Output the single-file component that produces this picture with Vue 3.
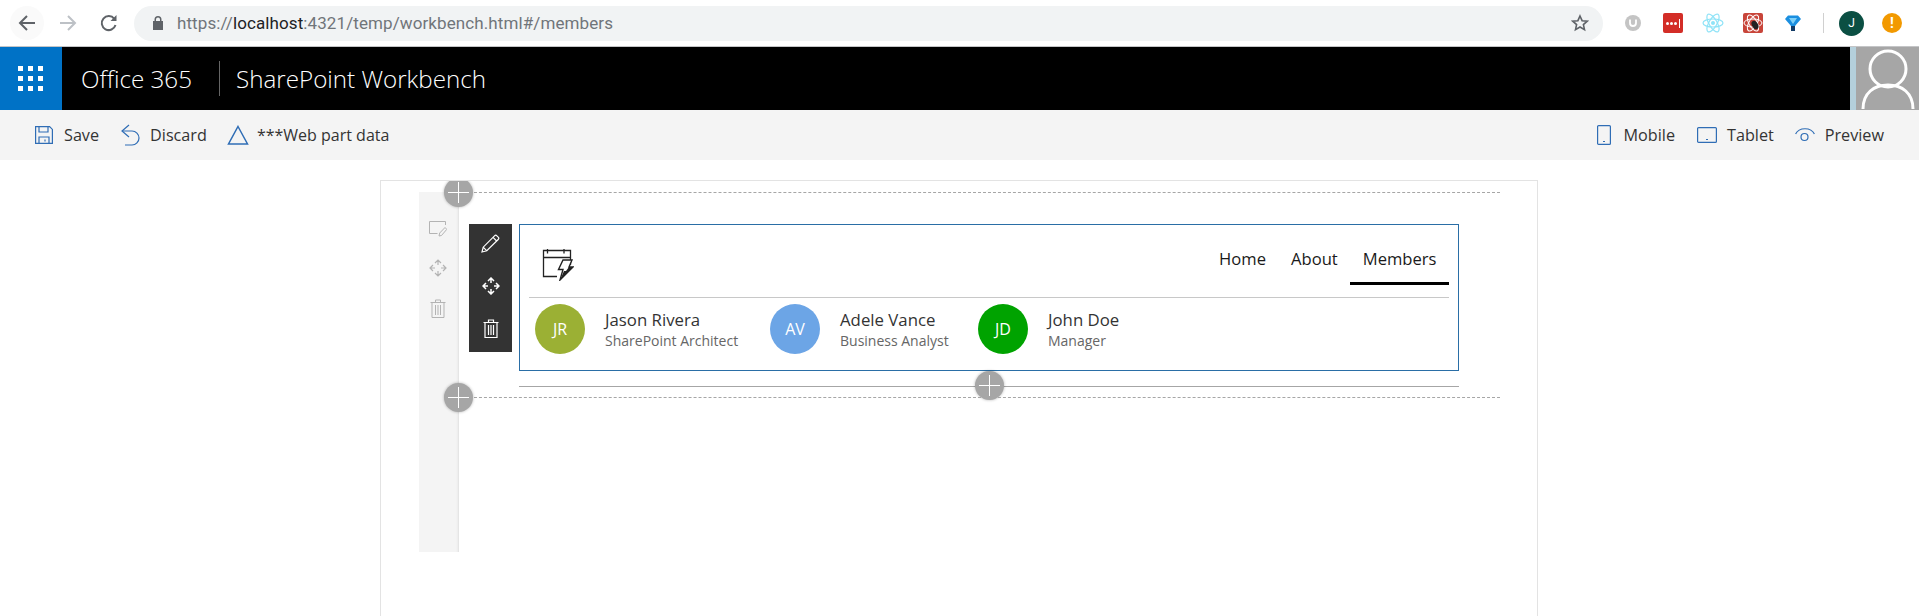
<script setup>
const people = [
  { id: 'JR', name: 'Jason Rivera', role: 'SharePoint Architect', tone: 'olive' },
  { id: 'AV', name: 'Adele Vance', role: 'Business Analyst', tone: 'sky' },
  { id: 'JD', name: 'John Doe', role: 'Manager', tone: 'green' }
]
const links = ['Home', 'About', 'Members']
</script>

<template>
  <div class="app">
    <header class="chrome">
      <div class="nav-icons">
        <span class="back-wrap">
          <svg width="18" height="18" viewBox="0 0 18 18" fill="none" stroke="#5f6368" stroke-width="2"><path d="M17 9H2M9 2 2 9l7 7"/></svg>
        </span>
        <svg class="fwd" width="18" height="18" viewBox="0 0 18 18" fill="none" stroke="#bdc1c6" stroke-width="2"><path d="M1 9h15M9 2l7 7-7 7"/></svg>
        <svg class="reload" width="18" height="18" viewBox="0 0 18 18" fill="none" stroke="#5f6368" stroke-width="2"><path d="M15.500 11a7 7 0 1 1-1.200-6.200"/><path d="M16.500 1v6h-6" fill="#5f6368" stroke="none"/></svg>
      </div>
      <div class="omnibox">
        <svg class="lock" width="12" height="14" viewBox="0 0 12 14"><path fill="#5f6368" d="M1 5h1.500V3.500a3.500 3.500 0 0 1 7 0V5H11v9H1zM4 5h4V3.500a2 2 0 0 0-4 0z"/></svg>
        <span class="url"><span class="dim">https://</span><span class="host">localhost</span><span class="dim">:4321/temp/workbench.html#/members</span></span>
        <svg class="star" width="18" height="18" viewBox="0 0 18 18" fill="none" stroke="#5f6368" stroke-width="1.600"><path d="M9 2l2.100 4.700 5.100.5-3.800 3.400 1.100 5L9 13l-4.500 2.600 1.100-5L1.800 7.200l5.100-.5z"/></svg>
      </div>
      <div class="extensions">
        <span class="ext-u"><svg width="10" height="10" viewBox="0 0 10 10" fill="none" stroke="#fff" stroke-width="1.800"><path d="M2 1.500v3.500a3 3 0 0 0 6 0V1.500"/></svg></span>
        <span class="ext-lp"><i></i><i></i><i></i><b></b></span>
        <svg class="ext" width="22" height="20" viewBox="0 0 22 20" fill="none" stroke="#8fe3f7" stroke-width="1.200"><ellipse cx="11" cy="10" rx="10" ry="4"/><ellipse cx="11" cy="10" rx="10" ry="4" transform="rotate(60 11 10)"/><ellipse cx="11" cy="10" rx="10" ry="4" transform="rotate(120 11 10)"/><circle cx="11" cy="10" r="2" fill="#8fe3f7" stroke="none"/></svg>
        <span class="ext-bug"><svg width="20" height="20" viewBox="0 0 20 20" fill="none" stroke="#fff" stroke-width="1"><ellipse cx="10" cy="10" rx="9" ry="4"/><ellipse cx="10" cy="10" rx="9" ry="4" transform="rotate(60 10 10)"/><ellipse cx="10" cy="10" rx="9" ry="4" transform="rotate(120 10 10)"/><ellipse cx="12" cy="12" rx="3" ry="4.500" fill="#222" stroke="none" transform="rotate(-30 12 12)"/></svg></span>
        <svg class="ext funnel" width="20" height="20" viewBox="0 0 20 20"><path fill="#1b8fe0" d="M2 6l3-3.500h10L18 6l-6 7H8z"/><path fill="#7fd0f7" d="M6 5h8l-4 6z"/><path fill="#123a66" d="M8 13h4v5H8z"/></svg>
        <span class="ext-sep"></span>
        <span class="ext-avatar">J</span>
        <span class="ext-alert">!</span>
      </div>
    </header>

    <div class="suite">
      <div class="waffle"><i v-for="n in 9" :key="n"></i></div>
      <span class="brand">Office 365</span>
      <span class="suite-title">SharePoint Workbench</span>
      <div class="profile">
        <svg width="63" height="63" viewBox="0 0 63 63" fill="none" stroke="#fff" stroke-width="3"><circle cx="32" cy="22" r="18"/><path d="M7 62c0-16 11-24 25-24s25 8 25 24"/></svg>
      </div>
    </div>

    <nav class="commands">
      <div class="cmd-group">
        <button class="cmd save">
          <svg width="18" height="18" viewBox="0 0 18 18" fill="none" stroke="#2f6db5" stroke-width="1.200"><path d="M.6.6h14l2.800 2.800v14H.6z"/><path d="M4 .6v5.400h9V.6M4 17.400V11h10v6.400"/><path d="M10 13.500v2"/></svg>
          Save
        </button>
        <button class="cmd discard">
          <svg width="20" height="22" viewBox="0 0 20 22" fill="none" stroke="#2f6db5" stroke-width="1.200"><path d="M9 1 2 7l7 6"/><path d="M2 7h10a6.500 6.500 0 0 1 0 14H5"/></svg>
          Discard
        </button>
        <button class="cmd data">
          <svg width="22" height="20" viewBox="0 0 22 20" fill="none" stroke="#2f6db5" stroke-width="1.500"><path d="M11 1.500 20.500 19h-19z"/></svg>
          ***Web part data
        </button>
      </div>
      <div class="cmd-group">
        <button class="cmd mobile">
          <svg width="14" height="20" viewBox="0 0 14 20" fill="none" stroke="#2f6db5" stroke-width="1.200"><rect x=".6" y=".6" width="12.800" height="18.800" rx="1"/><path d="M6 16.500h2"/></svg>
          Mobile
        </button>
        <button class="cmd tablet">
          <svg width="20" height="16" viewBox="0 0 20 16" fill="none" stroke="#2f6db5" stroke-width="1.200"><rect x=".6" y=".6" width="18.800" height="14.800" rx="1"/><path d="M9 12.500h2"/></svg>
          Tablet
        </button>
        <button class="cmd preview">
          <svg width="20" height="14" viewBox="0 0 20 14" fill="none" stroke="#2f6db5" stroke-width="1.200"><path d="M.6 6C4-1 16-1 19.400 6"/><circle cx="9.500" cy="9" r="3.500"/></svg>
          Preview
        </button>
      </div>
    </nav>

    <main class="canvas">
      <aside class="rail">
        <svg width="18" height="16" viewBox="0 0 18 16" fill="none" stroke="#b3b3b3" stroke-width="1"><path d="M16.500 4V.5H.5v12h8"/><path d="M10 15l.7-3 5.300-5.500 1.800 1.800L12.500 14.500z"/></svg>
        <svg width="18" height="18" viewBox="0 0 18 18" fill="none" stroke="#b3b3b3" stroke-width="1.200"><path d="M6 4l3-3 3 3M6 14l3 3 3-3M4 6 1 9l3 3M14 6l3 3-3 3M9 1v5M9 12v5M1 9h5M12 9h5"/></svg>
        <svg width="16" height="19" viewBox="0 0 16 19" fill="none" stroke="#b3b3b3" stroke-width="1"><path d="M.5 3.500h15M2 3.500v15h12v-15M5.500 3.500V1h5v2.500M5.500 6v10M8 6v10M10.500 6v10"/></svg>
      </aside>

      <section class="column">
        <div class="line-add">
          <span class="plus"></span>
        </div>

        <div class="zone">
          <div class="tools">
            <svg width="19" height="19" viewBox="0 0 19 19" fill="none" stroke="#fff" stroke-width="1.200"><path d="M1 18l1.200-4.800L13.500 1.800a1.700 1.700 0 0 1 2.400 0l1.300 1.300a1.700 1.700 0 0 1 0 2.400L5.800 16.800zM2.200 13.200l3.600 3.600M12 3.300l3.700 3.700"/></svg>
            <svg width="18" height="18" viewBox="0 0 18 18" fill="none" stroke="#fff" stroke-width="1.500"><path d="M6 4l3-3 3 3M6 14l3 3 3-3M4 6 1 9l3 3M14 6l3 3-3 3M9 1v5M9 12v5M1 9h5M12 9h5"/></svg>
            <svg width="16" height="19" viewBox="0 0 16 19" fill="none" stroke="#fff" stroke-width="1.200"><path d="M.5 3.500h15M2 3.500v15h12v-15M5.500 3.500V1h5v2.500M5.500 6v10M8 6v10M10.500 6v10"/></svg>
          </div>

          <article class="webpart">
            <div class="wp-head">
              <svg class="logo" width="32" height="32" viewBox="0 0 32 32" fill="none" stroke="#222" stroke-width="1.300"><path d="M15 27.500H1.500v-26h27V16M1.500 8.500h27M5.500 0v4.500M22 0v4.500"/><path d="M21 11h9l-3 7h4L18 31l3-10.500h-4.500z" fill="#fff" stroke-width="1.400"/><path d="M27 18h4L18 31l4-9h2z" fill="#222" stroke="none"/></svg>
              <div class="links">
                <a v-for="l in links" :key="l" class="link" :class="{ active: l === 'Members' }">{{ l }}</a>
              </div>
            </div>
            <div class="people">
              <div v-for="p in people" :key="p.id" class="person">
                <span class="avatar" :class="p.tone">{{ p.id }}</span>
                <div class="who">
                  <div class="name">{{ p.name }}</div>
                  <div class="role">{{ p.role }}</div>
                </div>
              </div>
            </div>
          </article>
        </div>

        <div class="solid-add">
          <span class="plus"></span>
        </div>
        <div class="line-add">
          <span class="plus"></span>
        </div>
      </section>
    </main>
  </div>
</template>

<style>
html, body { margin: 0; background: #fff; overflow: hidden; }
</style>

<style scoped>
.app {
  width: 1919px;
  height: 616px;
  overflow: hidden;
  display: flex;
  flex-direction: column;
  font-family: "Open Sans", "Noto Sans", sans-serif;
  color: #333;
}
i { display: block; font-style: normal; }

/* browser chrome */
.chrome {
  height: 46px;
  flex: none;
  box-sizing: content-box;
  border-bottom: 1px solid #c4c5c7;
  display: flex;
  align-items: center;
  background: #fff;
}
.nav-icons { display: flex; align-items: center; width: 134px; flex: none; padding-left: 10px; box-sizing: border-box; }
.back-wrap {
  width: 34px; height: 34px; border-radius: 50%; background: #fafafa;
  display: flex; align-items: center; justify-content: center;
}
.fwd { margin-left: 15px; }
.reload { margin-left: 23px; }
.omnibox {
  width: 1469px; height: 35px; flex: none; border-radius: 18px; background: #f1f3f4;
  display: flex; align-items: center; box-sizing: border-box; padding: 0 14px 0 18px;
}
.lock { margin-right: 13px; flex: none; }
.url { font-family: "Roboto", sans-serif; font-size: 17px; letter-spacing: .1px; white-space: nowrap; flex: 1; }
.dim { color: #70757a; }
.host { color: #202124; }
.extensions { display: flex; align-items: center; flex: 1; padding-left: 22px; }
.ext-u {
  width: 16px; height: 16px; border-radius: 50%; background: #c4c4c4;
  display: flex; align-items: center; justify-content: center;
}
.ext-lp {
  width: 20px; height: 20px; margin-left: 22px; background: #d32d27; border-radius: 2px;
  display: flex; align-items: center; justify-content: center; gap: 1px;
}
.ext-lp i { width: 3px; height: 3px; border-radius: 50%; background: #fff; }
.ext-lp b { width: 1px; height: 9px; background: #fff; margin-left: 1px; }
.ext { margin-left: 19px; flex: none; }
.funnel { margin-left: 20px; }
.ext-bug {
  width: 20px; height: 20px; margin-left: 19px; background: #c8453a; border-radius: 2px;
  display: flex;
}
.ext-sep { width: 1px; height: 20px; background: #d0d0d0; margin-left: 20px; }
.ext-avatar {
  width: 25px; height: 25px; margin-left: 15px; border-radius: 50%; background: #0b4f43; color: #fff;
  font: 12px "Roboto", sans-serif; display: flex; align-items: center; justify-content: center;
}
.ext-alert {
  width: 20px; height: 20px; margin-left: 18px; border-radius: 50%; background: #f29900; color: #fff;
  font: 700 14px "Roboto", sans-serif; display: flex; align-items: center; justify-content: center;
}

/* suite bar */
.suite {
  height: 63px; flex: none; background: #000; color: #fff; display: flex; align-items: center;
}
.waffle {
  width: 62px; height: 63px; flex: none; background: #0072c6; box-sizing: border-box; padding: 19px 18px;
  display: grid; grid-template-columns: repeat(3, 5px); grid-auto-rows: 5px; gap: 5px;
}
.waffle i { background: #fff; }
.brand { margin-left: 19px; font-size: 24.200px; font-weight: 300; width: 138px; border-right: 1px solid #666; line-height: 35px; }
.suite-title { margin-left: 16px; font-size: 24.200px; font-weight: 300; flex: 1; }
.profile { width: 63px; height: 63px; background: #a6a6a6; box-shadow: -6px 0 0 #b4d0dc; flex: none; }
.profile svg { display: block; }

/* command bar */
.commands {
  height: 50px; flex: none; background: #f4f4f4; display: flex; justify-content: space-between; align-items: center;
  padding: 0 35px;
}
.cmd-group { display: flex; align-items: center; }
.cmd {
  border: 0; background: none; padding: 0; color: #333; font: 16.200px "Open Sans", sans-serif;
  display: flex; align-items: center; gap: 11px;
}
.discard { margin-left: 21px; gap: 10px; }
.data { margin-left: 20px; gap: 8px; font-size: 16px; }
.mobile { gap: 13px; }
.tablet { margin-left: 22px; gap: 10px; }
.preview { margin-left: 21px; gap: 10px; }

/* canvas */
.canvas {
  flex: 1; width: 1158px; box-sizing: border-box; margin: 20px 0 0 380px;
  border: 1px solid #e3e3e3; border-bottom: 0; overflow: hidden;
  display: flex; padding: 11px 0 0 38px;
}
.rail {
  width: 40px; height: 360px; flex: none; background: #f4f4f4; box-shadow: inset -3px 0 3px -3px #c8c8c8;
  display: flex; flex-direction: column; align-items: center; padding: 29px 2px 0 0; gap: 22px; box-sizing: border-box;
}
.column { width: 1041px; flex: none; }
.line-add { border-top: 1px dashed #a6a6a6; height: 0; position: relative; }
.solid-add { position: relative; margin: 15px 0 10px 60px; width: 940px; border-top: 1px solid #a6a6a6; height: 0; }
.plus {
  position: absolute; width: 29px; height: 29px; border-radius: 50%; background: #a6a6a6; left: -15px; top: -15px;
  box-shadow: 0 0 3px rgba(0,0,0,.3);
}
.plus::before, .plus::after { content: ""; position: absolute; background: #fff; }
.plus::before { left: 4px; right: 4px; top: 14px; height: 1px; }
.plus::after { top: 4px; bottom: 4px; left: 14px; width: 1px; }
.solid-add .plus { left: 456px; top: -16px; }
.zone { display: flex; padding: 31px 0 0 10px; gap: 7px; }
.tools {
  width: 43px; height: 128px; flex: none; background: #333; display: flex; flex-direction: column; align-items: center;
  padding-top: 10px; gap: 24px; box-sizing: border-box;
}
.webpart {
  width: 940px; height: 147px; box-sizing: border-box; border: 1px solid #2a6ea6; padding: 0 9px; flex: none;
}
.wp-head {
  height: 73px; box-sizing: border-box; border-bottom: 1px solid #c8c8c8; display: flex; align-items: flex-start; justify-content: space-between;
}
.logo { margin: 24px 0 0 13px; }
.links { display: flex; margin-top: 16px; }
.link {
  font-size: 16.600px; color: #1a1a1a; padding: 0 12.500px; height: 41px; line-height: 36px; box-sizing: content-box; border-bottom: 3px solid transparent;
}
.link.active { border-bottom-color: #000; }
.people { display: grid; grid-template-columns: 235px 208px auto; padding: 6px 0 0 6px; }
.person { display: flex; gap: 20px; align-items: center; }
.avatar {
  width: 50px; height: 50px; border-radius: 50%; flex: none; color: #fff; font-size: 16px; display: flex; align-items: center; justify-content: center;
}
.olive { background: #9bb034; }
.sky { background: #6ca5e6; }
.green { background: #00a300; }
.who { white-space: nowrap; }
.name { font-size: 16.800px; line-height: 22px; color: #333; }
.role { font-size: 14px; line-height: 19px; color: #666; }
</style>
